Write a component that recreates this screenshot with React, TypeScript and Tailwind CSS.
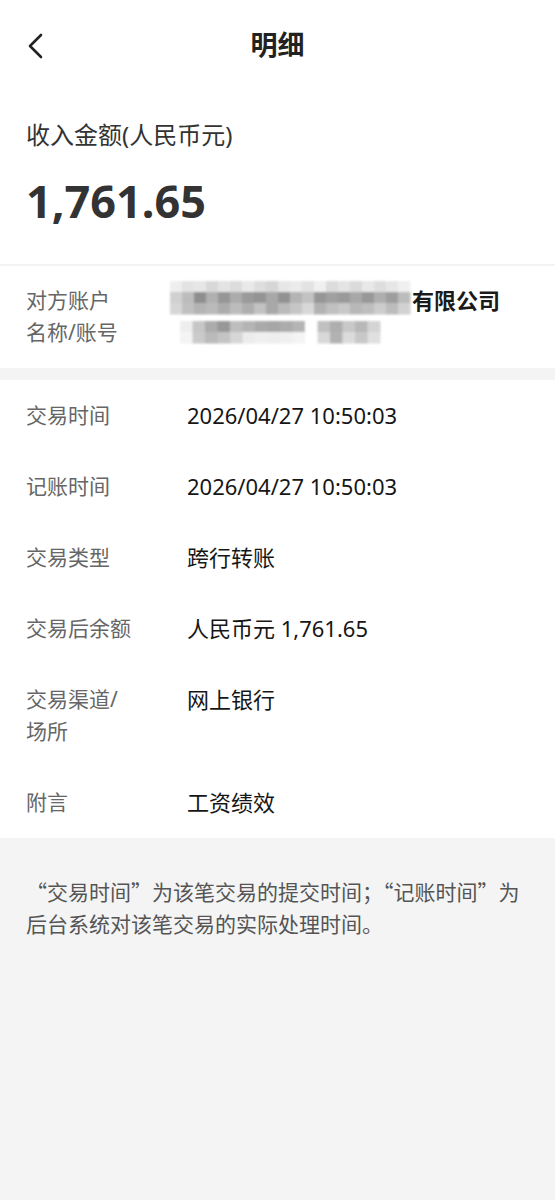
const font = { fontFamily: '"Noto Sans", "Noto Sans CJK SC", sans-serif' };

// pixelated (redacted) account name and number
const nameCells = [
  ['#eeeeee', '#e2e2e2', '#e6e6e6', '#d8d8d8', '#e4e4e4', '#dcdcdc', '#e9e9e9', '#dedede', '#d6d6d6', '#e6e6e6', '#ebebeb', '#e2e2e2', '#f0f0f0', '#dcdcdc', '#e4e4e4', '#dadada', '#e8e8e8', '#dedede', '#e6e6e6', '#f0f0f0'],
  ['#d0d0d0', '#bcbcbc', '#8e8e8e', '#b0b0b0', '#969696', '#acacac', '#9a9a9a', '#949494', '#a8a8a8', '#929292', '#b4b4b4', '#c2c2c2', '#969696', '#a0a0a0', '#9a9a9a', '#a8a8a8', '#989898', '#aeaeae', '#9e9e9e', '#bcbcbc'],
  ['#d6d6d6', '#c0c0c0', '#b4b4b4', '#bababa', '#acacac', '#bcbcbc', '#aeaeae', '#c2c2c2', '#a8a8a8', '#bababa', '#c6c6c6', '#d8d8d8', '#b2b2b2', '#c0c0c0', '#c8c8c8', '#b8b8b8', '#bebebe', '#cccccc', '#bcbcbc', '#d2d2d2'],
];

const numberCells = [
  ['#eeeeee', '#c6c6c6', '#acacac', '#989898', '#bebebe', '#b4b4b4', '#aaaaaa', '#a6a6a6', '#acacac', '#b4b4b4', '#ffffff', '#c0c0c0', '#aeaeae', '#c8c8c8', '#b8b8b8', '#d4d4d4'],
  ['#f4f4f4', '#cacaca', '#bababa', '#c4c4c4', '#d6d6d6', '#ececec', '#f0f0f0', '#eeeeee', '#f0f0f0', '#f4f4f4', '#ffffff', '#d8d8d8', '#b2b2b2', '#dcdcdc', '#c8c8c8', '#e0e0e0'],
];

function Mosaic({ cells, cw, ch, id }: { cells: string[][]; cw: number; ch: number; id: string }) {
  const w = cells[0].length * cw;
  const h = cells.length * ch;
  return (
    <svg width={w + 4} height={h + 4} viewBox={`-2 -2 ${w + 4} ${h + 4}`} className="block shrink-0">
      <defs>
        <filter id={id} x="-5%" y="-20%" width="110%" height="140%">
          <feGaussianBlur stdDeviation="1" />
        </filter>
      </defs>
      <g filter={`url(#${id})`}>
        {cells.map((row, r) =>
          row.map((c, i) => <rect key={`${r}-${i}`} x={i * cw} y={r * ch} width={cw + 0.5} height={ch + 0.5} fill={c} />),
        )}
      </g>
    </svg>
  );
}

function Row({ label, value }: { label: React.ReactNode; value: string }) {
  return (
    <div className="grid grid-cols-[161px_1fr]">
      <div className="text-[21px] leading-[32px] text-[#666666]">{label}</div>
      <div className="text-[22px] leading-[32px] text-[#161616]">{value}</div>
    </div>
  );
}

export default function App() {
  return (
    <div className="min-h-[1200px] bg-[#f4f4f4]" style={font}>
      <div className="bg-white">
        <header className="grid h-[91px] grid-cols-[1fr_auto_1fr] items-center">
          <div className="pl-[27px]">
            <svg width="18" height="26" viewBox="0 0 18 26" className="block">
              <polyline points="14,2 3,13 14,24" fill="none" stroke="#222222" strokeWidth="2.6" strokeLinecap="round" strokeLinejoin="round" />
            </svg>
          </div>
          <h1 className="text-[27px] font-bold text-[#222222]">明细</h1>
          <div />
        </header>

        <section className="border-b-2 border-[#f3f3f3] px-[26px] pt-[28px] pb-[36px]">
          <p className="text-[24px] leading-[32px] text-[#333333]">收入金额(人民币元)</p>
          <p className="mt-[23px] text-[45px] leading-[54px] font-bold text-[#333333]">1,761.65</p>
        </section>

        <section className="grid grid-cols-[142px_1fr] px-[26px] pt-[18px] pb-[20px]">
          <div className="text-[21px] leading-[32px] text-[#666666]">
            对方账户
            <br />
            名称/账号
          </div>
          <div className="flex flex-col">
            <div className="flex h-[32px] items-center">
              <div className="-mt-[6px]">
                <Mosaic cells={nameCells} cw={12} ch={11} id="blur-name" />
              </div>
              <span className="text-[22px] font-bold text-[#1a1a1a]">有限公司</span>
            </div>
            <div className="flex h-[32px] items-center pl-[10px]">
              <Mosaic cells={numberCells} cw={12.5} ch={11} id="blur-number" />
            </div>
          </div>
        </section>
      </div>

      <section className="mt-[12px] flex flex-col gap-[39px] bg-white px-[26px] pt-[19px] pb-[20px]">
        <Row label="交易时间" value="2026/04/27 10:50:03" />
        <Row label="记账时间" value="2026/04/27 10:50:03" />
        <Row label="交易类型" value="跨行转账" />
        <Row label="交易后余额" value="人民币元 1,761.65" />
        <Row
          label={
            <>
              交易渠道/
              <br />
              场所
            </>
          }
          value="网上银行"
        />
        <Row label="附言" value="工资绩效" />
      </section>

      <p
        className="px-[26px] pt-[37px] text-[21px] leading-[32px] text-[#555555]"
        style={{ fontFamily: '"Noto Sans CJK SC", sans-serif' }}
      >
        “交易时间”为该笔交易的提交时间；“记账时间”为后台系统对该笔交易的实际处理时间。
      </p>
    </div>
  );
}
